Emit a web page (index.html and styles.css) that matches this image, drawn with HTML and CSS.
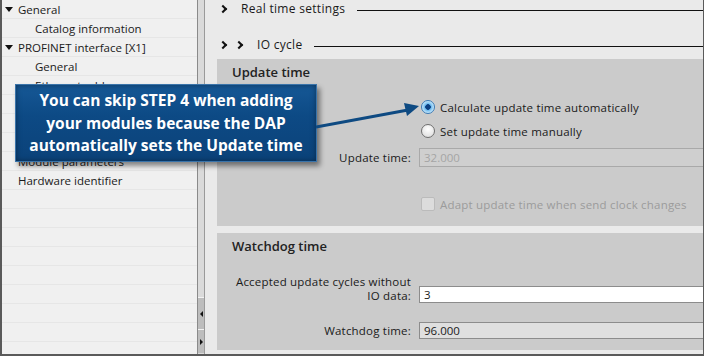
FILE: index.html
```html
<!DOCTYPE html>
<html lang="en">
<head>
    <meta charset="UTF-8">
    <title>PROFINET interface - IO cycle</title>
    <link rel="stylesheet" href="styles.css">
</head>
<body>
    <div class="window">
        <aside class="tree">
            <div class="row l0"><span class="caret"></span>General</div>
            <div class="row l1">Catalog information</div>
            <div class="row l0"><span class="caret"></span>PROFINET interface [X1]</div>
            <div class="row l1">General</div>
            <div class="row l1">Ethernet addresses</div>
            <div class="row l1">Advanced options</div>
            <div class="row l1">Hardware identifier</div>
            <div class="row l0">Shared Device</div>
            <div class="row l0">Module parameters</div>
            <div class="row l0">Hardware identifier</div>
        </aside>

        <div class="splitter">
            <div class="split-space"></div>
            <div class="split-btn"><span class="tri-left"></span></div>
            <div class="split-btn"><span class="tri-right"></span></div>
        </div>

        <main class="content">
            <div class="sect">
                <span class="chev"></span>
                <span class="sect-title">Real time settings</span>
                <span class="sect-line"></span>
            </div>
            <div class="sect sub">
                <span class="chev"></span>
                <span class="chev"></span>
                <span class="sect-title">IO cycle</span>
                <span class="sect-line"></span>
            </div>

            <section class="panel update">
                <h3 class="panel-title">Update time</h3>
                <div class="field first">
                    <span></span>
                    <label class="opt"><span class="radio on"></span>Calculate update time automatically</label>
                </div>
                <div class="field">
                    <span></span>
                    <label class="opt"><span class="radio"></span>Set update time manually</label>
                </div>
                <div class="field input-row">
                    <span class="lbl">Update time:</span>
                    <div class="box disabled">32.000</div>
                </div>
                <div class="field check-row">
                    <span></span>
                    <label class="opt muted"><span class="check"></span>Adapt update time when send clock changes</label>
                </div>
            </section>

            <section class="panel watchdog">
                <h3 class="panel-title">Watchdog time</h3>
                <div class="field two-line">
                    <span class="lbl">Accepted update cycles without<br>IO data:</span>
                    <div class="box white">3</div>
                </div>
                <div class="field">
                    <span class="lbl">Watchdog time:</span>
                    <div class="box light">96.000</div>
                </div>
            </section>
        </main>

        <div class="callout">
            You can skip STEP 4 when adding<br>
            your modules because the DAP<br>
            automatically sets the Update time
        </div>
        <svg class="arrow" width="110" height="30" viewBox="0 0 110 30">
            <line x1="0" y1="24" x2="92" y2="7" stroke="#0e4a82" stroke-width="3"/>
            <polygon points="103,3 88,0 91,13" fill="#0e4a82"/>
        </svg>
    </div>
</body>
</html>
```

FILE: styles.css
```css
body {
    margin: 0;
    font-family: 'Open Sans', 'Noto Sans', sans-serif;
    font-size: 11.5px;
    color: #1a1a1a;
}
.window {
    position: relative;
    display: flex;
    width: 704px;
    height: 356px;
    box-sizing: border-box;
    border: 2px solid #5a5a5a;
    border-top: none;
    border-right-width: 1px;
    overflow: hidden;
}

/* left navigation tree */
.tree {
    width: 195px;
    flex: none;
    background: repeating-linear-gradient(to bottom, #f0f0f0 0 18px, #e6e6e6 18px 19px);
}
.row {
    height: 19px;
    line-height: 18px;
    white-space: nowrap;
    display: flex;
    align-items: center;
}
.row.l0 {
    padding-left: 16px;
}
.row.l1 {
    padding-left: 33px;
}
.caret {
    width: 0;
    height: 0;
    border-left: 4px solid transparent;
    border-right: 4px solid transparent;
    border-top: 5px solid #111;
    margin-left: -13px;
    margin-right: 5px;
}

/* splitter between tree and editor */
.splitter {
    width: 6px;
    flex: none;
    display: flex;
    flex-direction: column;
    background: #dadada;
    border-left: 1px solid #8a8a8a;
    border-right: 1px solid #9a9a9a;
}
.split-space {
    flex: 1;
}
.split-btn {
    height: 31px;
    background: #bdbdbd;
    border-top: 1px solid #f2f2f2;
    display: flex;
    align-items: center;
    justify-content: center;
}
.split-btn + .split-btn {
    height: 23px;
    margin-bottom: 1px;
}
.tri-left, .tri-right {
    width: 0;
    height: 0;
    border-top: 3px solid transparent;
    border-bottom: 3px solid transparent;
}
.tri-left {
    border-right: 3px solid #111;
}
.tri-right {
    border-left: 3px solid #111;
}

/* editor area */
.content {
    flex: 1;
    background: #eaeaea;
    padding-left: 12px;
}
.sect {
    display: flex;
    align-items: center;
    height: 17px;
    margin-left: 1px;
    font-size: 12px;
    letter-spacing: 0.3px;
}
.sect.sub {
    margin-top: 19px;
}
.chev {
    width: 4px;
    height: 4px;
    border-right: 2px solid #111;
    border-bottom: 2px solid #111;
    transform: rotate(-45deg);
    margin-right: 9px;
    margin-left: 2px;
}
.sub .chev + .chev {
    margin-left: 1px;
    margin-right: 15px;
}
.sect-title {
    margin-left: 6px;
}
.sub .sect-title {
    margin-left: 0;
}
.sect-line {
    flex: 1;
    height: 1px;
    background: #111;
    margin-left: 12px;
    margin-top: 3px;
}

.panel {
    background: #cbcbcb;
    padding: 5px 0 0 15px;
    box-sizing: border-box;
}
.panel.update {
    margin-top: 6px;
    height: 167px;
}
.panel.watchdog {
    margin-top: 7px;
    height: 117px;
}
.panel-title {
    margin: 0;
    font-size: 13px;
    line-height: 16px;
    font-weight: 600;
    color: #222;
}

.field {
    display: grid;
    grid-template-columns: 194px 1fr;
    column-gap: 8px;
    align-items: center;
    margin-top: 6px;
    margin-left: -15px;
}
.field.first {
    margin-top: 18px;
}
.field.input-row {
    margin-top: 8px;
}
.field.check-row {
    margin-top: 28px;
}
.watchdog .field.two-line {
    margin-top: 21px;
    align-items: end;
}
.watchdog .field + .field {
    margin-top: 19px;
}
.lbl {
    text-align: right;
    line-height: 14px;
    letter-spacing: 0.2px;
    white-space: nowrap;
}
.opt {
    display: flex;
    align-items: center;
    height: 18px;
    padding-left: 2px;
    letter-spacing: 0.2px;
}
.opt.muted {
    color: #9b9b9b;
}
.radio {
    width: 12px;
    height: 12px;
    border-radius: 50%;
    border: 1px solid #6f6f6f;
    background: radial-gradient(circle at 50% 35%, #ffffff, #d8d8d8);
    margin-right: 5px;
}
.radio.on {
    border-color: #3a7ab5;
    background: radial-gradient(circle, #0c3f82 0 2.5px, #67b7ee 3px, #c8e8fb 6px);
}
.check {
    width: 12px;
    height: 12px;
    border: 1px solid #bbbbbb;
    border-radius: 2px;
    background: #dcdcdc;
    margin-right: 5px;
}
.box {
    height: 17px;
    box-sizing: border-box;
    border: 1px solid #8c8c8c;
    border-right: none;
    padding-left: 4px;
    line-height: 15px;
}
.box.disabled {
    height: 19px;
    line-height: 17px;
    background: #cfcfcf;
    border-color: #a9a9a9;
    color: #a5a5a5;
}
.box.white {
    background: #ffffff;
}
.box.light {
    background: #dfdfdf;
}

/* annotation over the screenshot */
.callout {
    position: absolute;
    left: 13px;
    top: 84px;
    width: 302px;
    height: 78px;
    box-sizing: border-box;
    padding-top: 5px;
    background: linear-gradient(to bottom, #165896, #0d4a85 40%, #0b4279);
    box-shadow: inset 0 0 0 1px #3a74aa, inset 0 0 6px rgba(0, 0, 0, 0.5), 3px 4px 5px rgba(0, 0, 0, 0.45);
    color: #ffffff;
    font-weight: 700;
    font-size: 15.5px;
    line-height: 22.5px;
    text-align: center;
    white-space: nowrap;
}
.arrow {
    position: absolute;
    left: 314px;
    top: 103px;
}
```
